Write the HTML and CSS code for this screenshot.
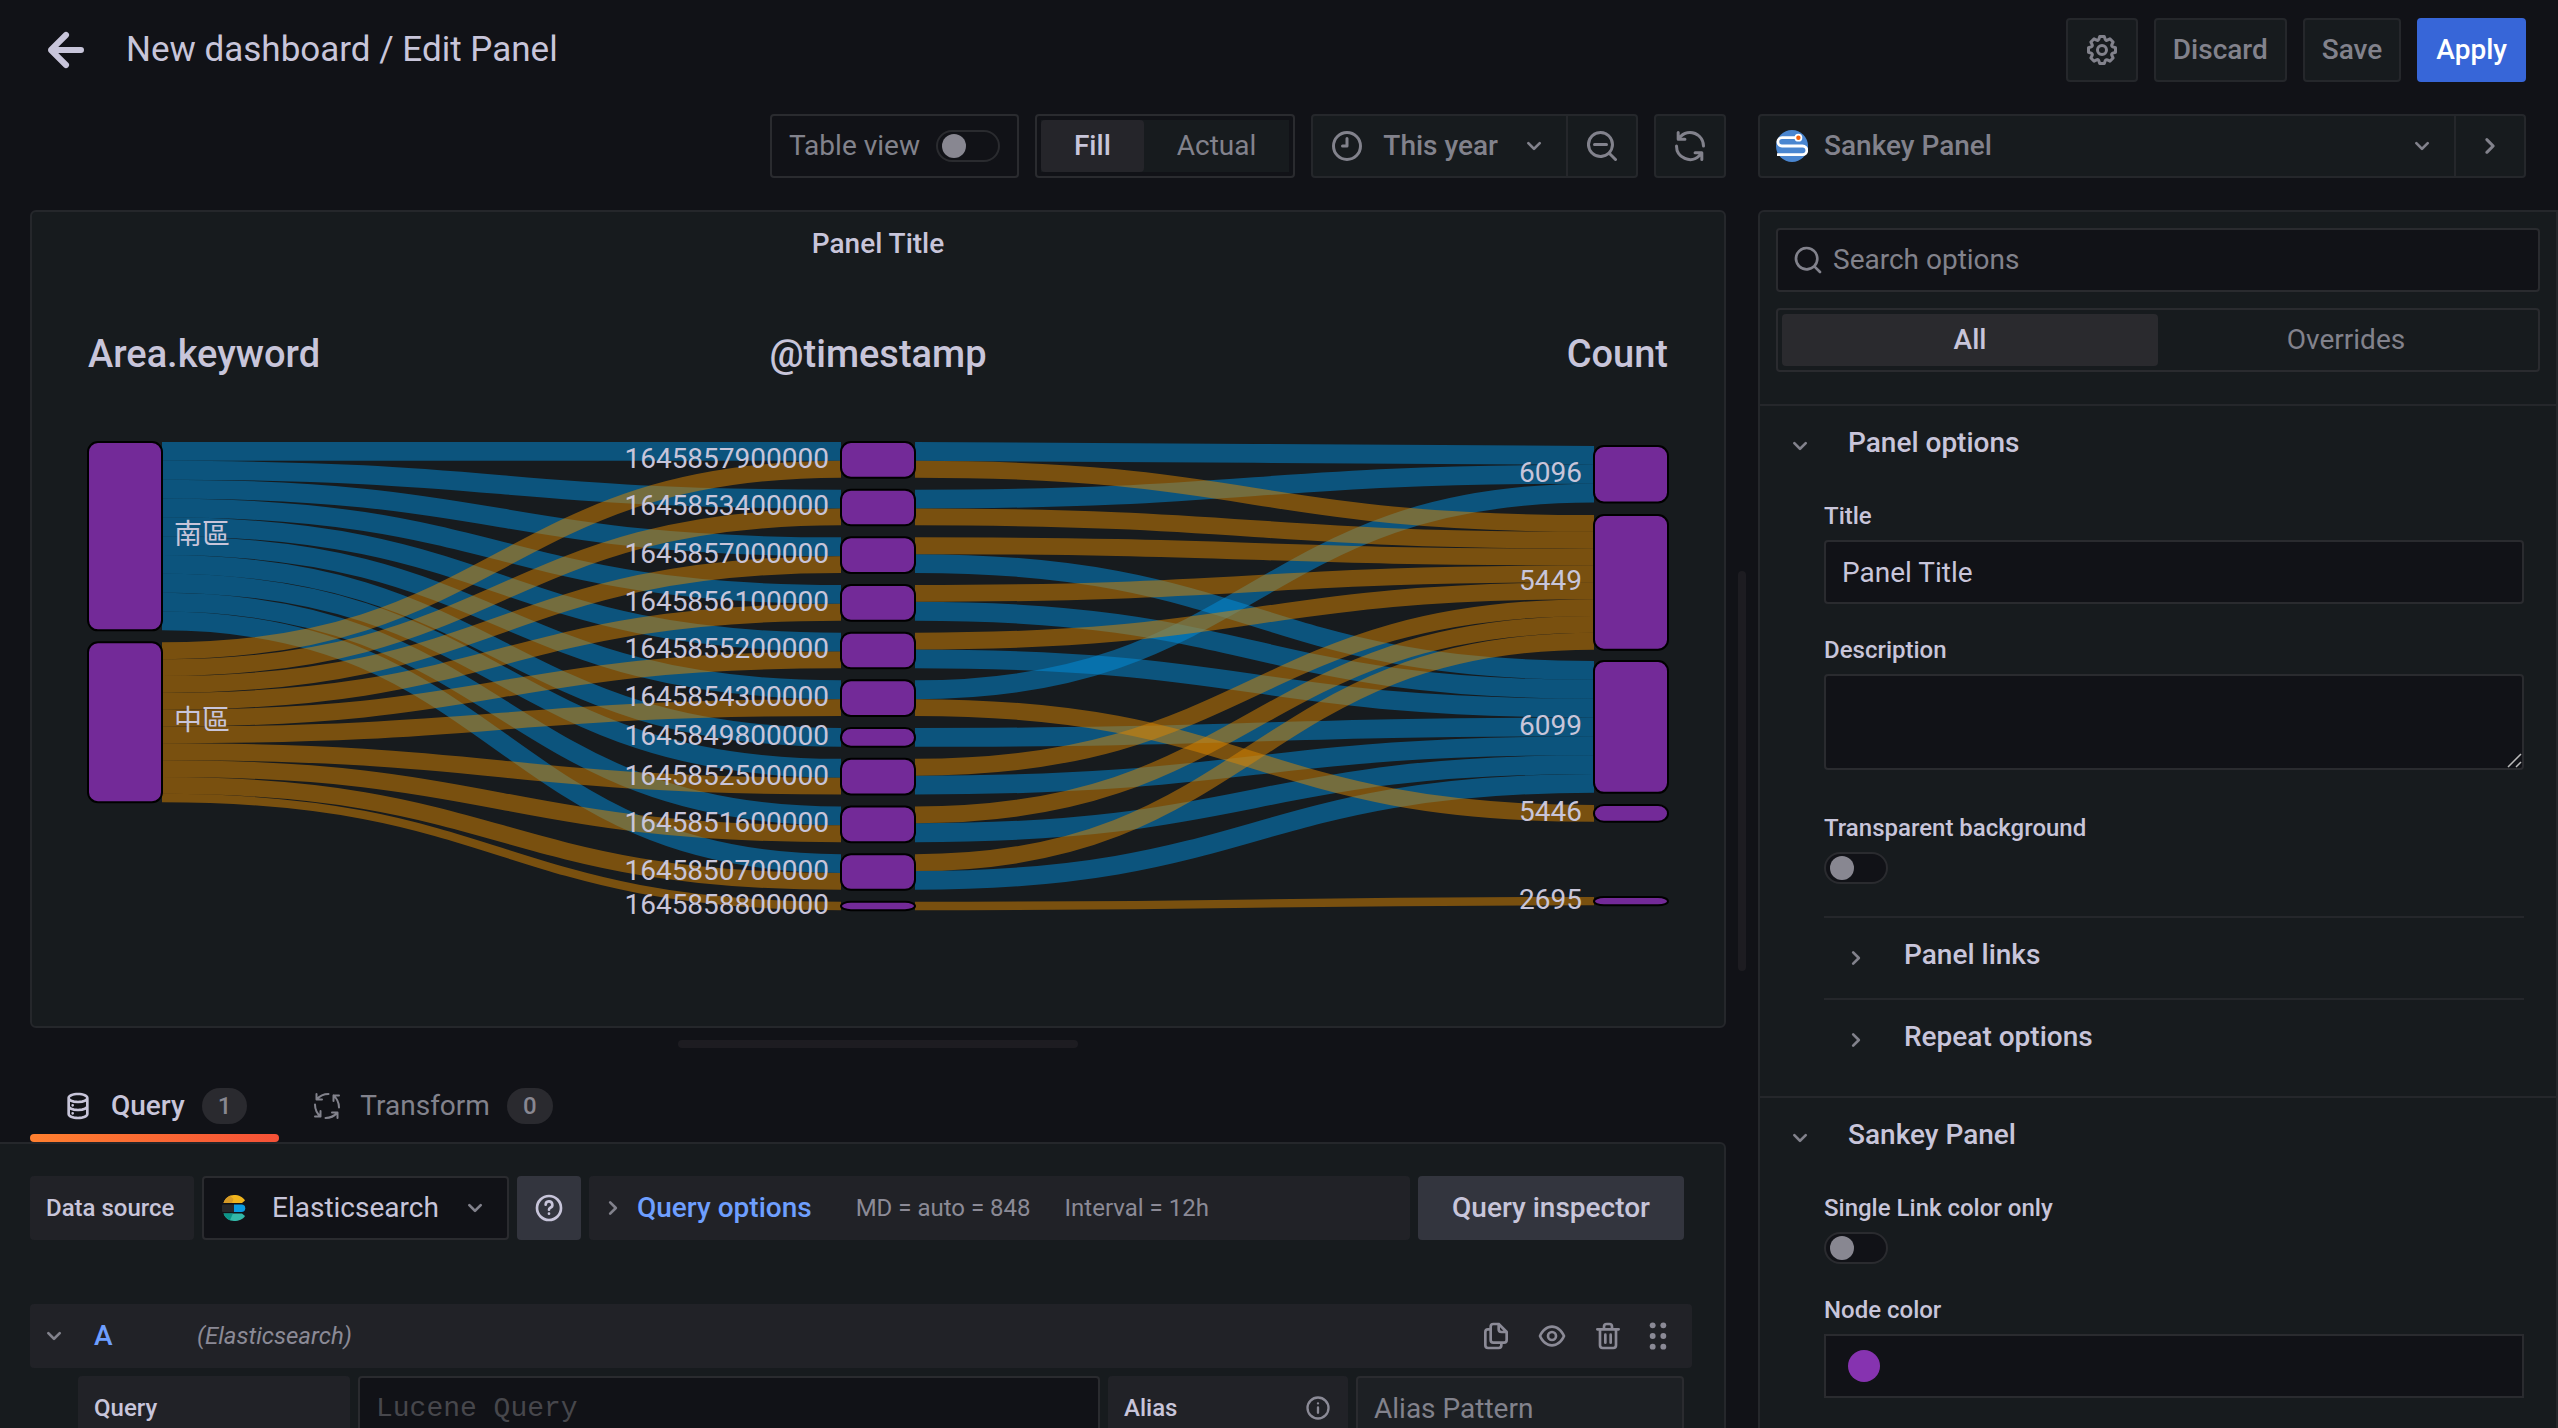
FILE: index.html
```html
<!DOCTYPE html>
<html lang="en">
<head>
<meta charset="utf-8">
<meta name="viewport" content="width=device-width, initial-scale=1">
<title>New dashboard / Edit Panel</title>
<link rel="stylesheet" href="styles.css">
</head>
<body>
<svg class="sprite" aria-hidden="true">
  <symbol id="angle-down" viewBox="0 0 24 24"><path d="M17,9.17a1,1,0,0,0-1.41,0L12,12.71,8.46,9.17a1,1,0,0,0-1.41,0,1,1,0,0,0,0,1.42l4.24,4.24a1,1,0,0,0,1.42,0L17,10.59A1,1,0,0,0,17,9.17Z"/></symbol>
  <symbol id="angle-right" viewBox="0 0 24 24"><path d="M14.83,11.29,10.59,7.05a1,1,0,0,0-1.42,0,1,1,0,0,0,0,1.41L12.71,12,9.17,15.54a1,1,0,0,0,0,1.41,1,1,0,0,0,.71.29,1,1,0,0,0,.71-.29l4.24-4.24A1,1,0,0,0,14.83,11.29Z"/></symbol>
</svg>

<header class="topbar">
  <button class="back" type="button" aria-label="Go back">
    <svg class="icon icon-back" viewBox="0 0 24 24"><path d="M17,11H9.41l3.3-3.29a1,1,0,1,0-1.42-1.42l-5,5a1,1,0,0,0-.21.33,1,1,0,0,0,0,.76,1,1,0,0,0,.21.33l5,5a1,1,0,0,0,1.42,0,1,1,0,0,0,0-1.42L9.41,13H17a1,1,0,0,0,0-2Z"/></svg>
  </button>
  <h1 class="page-title">New dashboard / Edit Panel</h1>
  <div class="actions">
    <button class="btn" type="button" aria-label="Dashboard settings">
      <svg class="icon icon-lg" viewBox="0 0 24 24"><path d="M21.32,9.55l-1.89-.63.89-1.78A1,1,0,0,0,20.13,6L18,3.87a1,1,0,0,0-1.15-.19l-1.78.89-.63-1.89A1,1,0,0,0,13.5,2h-3a1,1,0,0,0-.95.68L8.92,4.57,7.14,3.68A1,1,0,0,0,6,3.87L3.87,6a1,1,0,0,0-.19,1.15l.89,1.78-1.89.63A1,1,0,0,0,2,10.5v3a1,1,0,0,0,.68.95l1.89.63-.89,1.78A1,1,0,0,0,3.87,18L6,20.13a1,1,0,0,0,1.15.19l1.78-.89.63,1.89a1,1,0,0,0,.95.68h3a1,1,0,0,0,.95-.68l.63-1.89,1.78.89A1,1,0,0,0,18,20.13L20.13,18a1,1,0,0,0,.19-1.15l-.89-1.78,1.89-.63A1,1,0,0,0,22,13.5v-3A1,1,0,0,0,21.32,9.55ZM20,12.78l-1.2.4A2,2,0,0,0,17.64,16l.57,1.14-1.1,1.1L16,17.64a2,2,0,0,0-2.79,1.16l-.4,1.2H11.22l-.4-1.2A2,2,0,0,0,8,17.64l-1.14.57-1.1-1.1L6.36,16A2,2,0,0,0,5.2,13.18L4,12.78V11.22l1.2-.4A2,2,0,0,0,6.36,8L5.79,6.89l1.1-1.1L8,6.36A2,2,0,0,0,10.82,5.2l.4-1.2h1.56l.4,1.2A2,2,0,0,0,16,6.36l1.14-.57,1.1,1.1L17.64,8a2,2,0,0,0,1.16,2.79l1.2.4ZM12,8a4,4,0,1,0,4,4A4,4,0,0,0,12,8Zm0,6a2,2,0,1,1,2-2A2,2,0,0,1,12,14Z"/></svg>
    </button>
    <button class="btn btn-text" type="button">Discard</button>
    <button class="btn btn-text" type="button">Save</button>
    <button class="btn btn-text btn-primary" type="button">Apply</button>
  </div>
</header>

<main class="editor">
  <section class="workspace">
    <div class="toolbar">
      <label class="table-view">Table view <input class="switch" type="checkbox"></label>
      <fieldset class="segmented segmented-sm" aria-label="Display mode">
        <label class="segment"><input type="radio" name="display" checked><span>Fill</span></label>
        <label class="segment"><input type="radio" name="display"><span>Actual</span></label>
      </fieldset>
      <div class="btn-group">
        <button class="btn btn-time" type="button">
          <svg class="icon icon-lg line" viewBox="0 0 24 24"><circle cx="12" cy="12" r="9"/><path d="M12 7v5H9"/></svg>
          This year
          <svg class="icon"><use href="#angle-down"/></svg>
        </button>
        <button class="btn" type="button" aria-label="Zoom out">
          <svg class="icon icon-lg" viewBox="0 0 24 24"><path d="M21.71,20.29,18,16.61A9,9,0,1,0,16.61,18l3.68,3.68a1,1,0,0,0,1.42,0A1,1,0,0,0,21.71,20.29ZM11,18a7,7,0,1,1,7-7A7,7,0,0,1,11,18Zm4-8H7a1,1,0,0,0,0,2h8a1,1,0,0,0,0-2Z"/></svg>
        </button>
      </div>
      <button class="btn" type="button" aria-label="Refresh">
        <svg class="icon icon-lg" viewBox="0 0 24 24"><path d="M19.91,15.51H15.38a1,1,0,0,0,0,2h2.4A8,8,0,0,1,4,12a1,1,0,0,0-2,0,10,10,0,0,0,16.88,7.23V21a1,1,0,0,0,2,0V16.5A1,1,0,0,0,19.91,15.51ZM12,2A10,10,0,0,0,5.12,4.77V3a1,1,0,0,0-2,0V7.5a1,1,0,0,0,1,1h4.5a1,1,0,0,0,0-2H6.22A8,8,0,0,1,20,12a1,1,0,0,0,2,0A10,10,0,0,0,12,2Z"/></svg>
      </button>
    </div>

    <article class="panel">
      <h2 class="panel-title">Panel Title</h2>
      <svg id="sankey" class="sankey" viewBox="0 0 1692 750" role="img" aria-label="Sankey diagram"></svg>
    </article>
    <div class="resize-row"><div class="handle handle-row"></div></div>

    <nav class="tabs">
      <button class="tab tab-active" type="button">
        <svg class="icon" viewBox="0 0 24 24"><path d="M8,16.5a1,1,0,1,0,1,1A1,1,0,0,0,8,16.5ZM12,2C8,2,4,3.37,4,6V18c0,2.63,4,4,8,4s8-1.37,8-4V6C20,3.37,16,2,12,2Zm6,16c0,.71-2.28,2-6,2s-6-1.29-6-2V14.73A13.16,13.16,0,0,0,12,16a13.16,13.16,0,0,0,6-1.27Zm0-6c0,.71-2.28,2-6,2s-6-1.29-6-2V8.73A13.16,13.16,0,0,0,12,10a13.16,13.16,0,0,0,6-1.27ZM12,8C8.28,8,6,6.71,6,6s2.28-2,6-2,6,1.29,6,2S15.72,8,12,8ZM8,10.5a1,1,0,1,0,1,1A1,1,0,0,0,8,10.5Z"/></svg>
        Query <span class="badge">1</span>
      </button>
      <button class="tab" type="button">
        <svg class="icon line" viewBox="-2 -2 32 32">
          <g id="turn"><path d="M3.500 2v5.500h5.500M15.500 2C10.500 2 7 3.500 3.500 7.500"/></g>
          <use href="#turn" transform="rotate(90 14 14)"/><use href="#turn" transform="rotate(180 14 14)"/><use href="#turn" transform="rotate(270 14 14)"/>
        </svg>
        Transform <span class="badge">0</span>
      </button>
    </nav>

    <section class="query-pane">
      <div class="source-row">
        <label class="tag tag-source" for="source">Data source</label>
        <div class="source-select">
          <svg class="elastic" viewBox="0 0 24 28">
            <path fill="#f0b41d" d="M1.500 9C3 4 7 1 12 1c5 0 9 2 11 5.500L20 9z"/><path fill="#d69a27" d="M1.500 9C2.500 5.500 5 3 8 1.800L11.500 5 10 9z"/>
            <rect x="0" y="10.500" width="13" height="7.500" rx="1" fill="#27282b"/><path fill="#0b9be0" d="M12 10.500h7.500a3.750 3.750 0 0 1 0 7.500H12z"/>
            <path fill="#33b8a8" d="M1.500 19.500H20l3 2.500c-2 3.500-6 5-11 5-5 0-9-3-10.500-7.500z"/><path fill="#0c9488" d="M1.500 19.500H11L8 26.200C5 25 2.500 22.500 1.500 19.500z"/>
          </svg>
          <select id="source"><option>Elasticsearch</option></select>
          <svg class="icon chevron"><use href="#angle-down"/></svg>
        </div>
        <button class="btn btn-solid btn-help" type="button" aria-label="Help">
          <svg class="icon line" viewBox="0 0 24 24"><circle cx="12" cy="12" r="9"/><path d="M9.500 9.500A2.500 2.500 0 1 1 12.800 11.900Q12 12.300 12 13.300M12 16.200v.1"/></svg>
        </button>
        <div class="query-options">
          <button class="options-toggle" type="button"><svg class="icon"><use href="#angle-right"/></svg>Query options</button>
          <span>MD = auto = 848</span>
          <span>Interval = 12h</span>
        </div>
        <button class="btn btn-solid btn-inspect" type="button">Query inspector</button>
      </div>

      <div class="query-head">
        <svg class="icon"><use href="#angle-down"/></svg>
        <strong class="ref-id">A</strong>
        <em class="ref-source">(Elasticsearch)</em>
        <button class="icon-btn" type="button" aria-label="Duplicate query"><svg class="icon" viewBox="0 0 24 24"><path d="M21,8.94a1.31,1.31,0,0,0-.06-.27l0-.09a1.07,1.07,0,0,0-.19-.28h0l-6-6h0a1.07,1.07,0,0,0-.28-.19.32.32,0,0,0-.09,0A.88.88,0,0,0,14.05,2H10A3,3,0,0,0,7,5V6H6A3,3,0,0,0,3,9V19a3,3,0,0,0,3,3h8a3,3,0,0,0,3-3V18h1a3,3,0,0,0,3-3V9S21,9,21,8.94ZM15,5.410,17.590,8H16a1,1,0,0,1-1-1ZM15,19a1,1,0,0,1-1,1H6a1,1,0,0,1-1-1V9A1,1,0,0,1,6,8H7v7a3,3,0,0,0,3,3h5Zm4-4a1,1,0,0,1-1,1H10a1,1,0,0,1-1-1V5a1,1,0,0,1,1-1h3V7a3,3,0,0,0,3,3h3Z"/></svg></button>
        <button class="icon-btn" type="button" aria-label="Disable query"><svg class="icon" viewBox="0 0 24 24"><path d="M21.920,11.600C19.900,6.910,16.100,4,12,4S4.100,6.910,2.080,11.600a1,1,0,0,0,0,.8C4.100,17.090,7.900,20,12,20s7.900-2.910,9.920-7.600A1,1,0,0,0,21.920,11.600ZM12,18c-3.170,0-6.170-2.290-7.900-6C5.830,8.290,8.830,6,12,6s6.170,2.290,7.900,6C18.170,15.710,15.170,18,12,18ZM12,8a4,4,0,1,0,4,4A4,4,0,0,0,12,8Zm0,6a2,2,0,1,1,2-2A2,2,0,0,1,12,14Z"/></svg></button>
        <button class="icon-btn" type="button" aria-label="Remove query"><svg class="icon" viewBox="0 0 24 24"><path d="M10,18a1,1,0,0,0,1-1V11a1,1,0,0,0-2,0v6A1,1,0,0,0,10,18ZM20,6H16V5a3,3,0,0,0-3-3H11A3,3,0,0,0,8,5V6H4A1,1,0,0,0,4,8H5V19a3,3,0,0,0,3,3h8a3,3,0,0,0,3-3V8h1a1,1,0,0,0,0-2ZM10,5a1,1,0,0,1,1-1h2a1,1,0,0,1,1,1V6H10Zm7,14a1,1,0,0,1-1,1H8a1,1,0,0,1-1-1V8H17Zm-3-1a1,1,0,0,0,1-1V11a1,1,0,0,0-2,0v6A1,1,0,0,0,14,18Z"/></svg></button>
        <button class="icon-btn icon-drag" type="button" aria-label="Move query"><svg class="icon" viewBox="0 0 24 24"><circle cx="8" cy="4" r="2.200"/><circle cx="16" cy="4" r="2.200"/><circle cx="8" cy="12" r="2.200"/><circle cx="16" cy="12" r="2.200"/><circle cx="8" cy="20" r="2.200"/><circle cx="16" cy="20" r="2.200"/></svg></button>
      </div>

      <div class="query-fields">
        <label class="tag tag-query" for="lucene">Query</label>
        <input id="lucene" class="input input-code" type="text" placeholder="Lucene Query">
        <label class="tag tag-alias" for="alias">Alias
          <svg class="icon icon-sm line" viewBox="0 0 24 24"><circle cx="12" cy="12" r="9"/><path d="M12 11.500v4.500M12 8v.1"/></svg>
        </label>
        <input id="alias" class="input input-alias" type="text" placeholder="Alias Pattern" disabled>
      </div>
    </section>
  </section>

  <div class="splitter"><div class="handle handle-column"></div></div>

  <aside class="sidebar">
    <div class="btn-group viz-picker">
      <button class="btn btn-viz" type="button" aria-haspopup="listbox">
        <svg class="viz-logo" viewBox="0 0 32 32"><circle cx="16" cy="16" r="16" fill="#4a86d0"/><path d="M22 7.700H6a4.150 4.150 0 0 0 0 8.300H26.500a4.350 4.350 0 0 1 0 8.700H1" fill="none" stroke="#fff" stroke-width="2.800"/><circle cx="22.400" cy="7.700" r="3.900" fill="#fff"/><circle cx="22.400" cy="7.700" r="2.200" fill="#f2600c"/></svg>
        Sankey Panel
        <svg class="icon"><use href="#angle-down"/></svg>
      </button>
      <button class="btn" type="button" aria-label="Collapse options"><svg class="icon icon-lg"><use href="#angle-right"/></svg></button>
    </div>

    <div class="options">
      <div class="options-filter">
        <div class="search">
          <svg class="icon" viewBox="0 0 24 24"><path d="M21.710,20.290,18,16.610A9,9,0,1,0,16.610,18l3.680,3.680a1,1,0,0,0,1.420,0A1,1,0,0,0,21.710,20.290ZM11,18a7,7,0,1,1,7-7A7,7,0,0,1,11,18Z"/></svg>
          <input type="text" placeholder="Search options" aria-label="Search options">
        </div>
        <fieldset class="segmented segmented-wide" aria-label="Option filter">
          <label class="segment"><input type="radio" name="filter" checked><span>All</span></label>
          <label class="segment"><input type="radio" name="filter"><span>Overrides</span></label>
        </fieldset>
      </div>

      <section class="group">
        <h3 class="group-title"><svg class="icon"><use href="#angle-down"/></svg>Panel options</h3>
        <div class="group-body">
          <div class="field">
            <label for="title">Title</label>
            <input id="title" class="input" type="text" value="Panel Title">
          </div>
          <div class="field">
            <label for="description">Description</label>
            <textarea id="description" class="input input-area"></textarea>
          </div>
          <div class="field">
            <label for="transparent">Transparent background</label>
            <input id="transparent" class="switch" type="checkbox">
          </div>
          <h4 class="subgroup"><svg class="icon"><use href="#angle-right"/></svg>Panel links</h4>
          <h4 class="subgroup"><svg class="icon"><use href="#angle-right"/></svg>Repeat options</h4>
        </div>
      </section>

      <section class="group">
        <h3 class="group-title"><svg class="icon"><use href="#angle-down"/></svg>Sankey Panel</h3>
        <div class="group-body">
          <div class="field">
            <label for="single">Single Link color only</label>
            <input id="single" class="switch" type="checkbox">
          </div>
          <div class="field">
            <label for="node-color">Node color</label>
            <button id="node-color" class="color-field" type="button"><span class="swatch"></span></button>
          </div>
        </div>
      </section>
    </div>
  </aside>
</main>
<script src="sankey.js"></script>
</body>
</html>
```

FILE: sankey.js
```js
// Draws the three-column flow diagram: area -> timestamp -> count.
(function () {
  const NS = "http://www.w3.org/2000/svg";
  const svg = document.getElementById("sankey");
  const SCALE = 18.83 / 6096;
  const GAP = 12;
  const NODE_WIDTH = 74;
  const COLUMNS = [56, 809, 1562];
  const COLORS = { south: "#018edb", central: "#db8500" };

  // Each timestamp lists its flows by area: [area, count].
  const times = [
    ["1645857900000", [["south", 6096], ["central", 5449]]],
    ["1645853400000", [["south", 6096], ["central", 5449]]],
    ["1645857000000", [["south", 6099], ["central", 5449]]],
    ["1645856100000", [["south", 6099], ["central", 5449]]],
    ["1645855200000", [["south", 6099], ["central", 5449]]],
    ["1645854300000", [["south", 6096], ["central", 5446]]],
    ["1645849800000", [["south", 6099]]],
    ["1645852500000", [["south", 6099], ["central", 5449]]],
    ["1645851600000", [["south", 6099], ["central", 5449]]],
    ["1645850700000", [["south", 6099], ["central", 5449]]],
    ["1645858800000", [["central", 2695]]]
  ];
  const areas = [["south", "南區"], ["central", "中區"]];
  const counts = [[6096, 170], [5449, 239], [6099, 385], [5446, 529], [2695, 621]];

  function add(name, attrs, text) {
    const el = document.createElementNS(NS, name);
    for (const key in attrs) el.setAttribute(key, attrs[key]);
    if (text) el.textContent = text;
    svg.appendChild(el);
  }

  const flows = [];
  times.forEach(([, list], i) => list.forEach(([area, count]) =>
    flows.push({ area, count, time: i, size: count * SCALE })));

  const nodes = [];
  function place(column, y, label, members) {
    const height = members.reduce((sum, f) => sum + f.size, 0);
    nodes.push({ x: COLUMNS[column], y, height, label, column });
    return height;
  }

  // Left column, stacked by area.
  let y = 166;
  areas.forEach(([area, label]) => {
    const members = flows.filter(f => f.area === area);
    let offset = y;
    members.forEach(f => { f.leftY = offset + f.size / 2; offset += f.size; });
    y += place(0, y, label, members) + GAP;
  });

  // Right column.
  counts.forEach(([count, top]) => {
    const members = flows.filter(f => f.count === count);
    let offset = top;
    members.forEach(f => { f.rightY = offset + f.size / 2; offset += f.size; });
    place(2, top, String(count), members);
  });

  // Middle column: incoming flows keep area order, outgoing follow their target.
  y = 166;
  times.forEach(([label], i) => {
    const members = flows.filter(f => f.time === i);
    let offset = y;
    members.forEach(f => { f.inY = offset + f.size / 2; offset += f.size; });
    offset = y;
    members.slice().sort((a, b) => a.rightY - b.rightY)
      .forEach(f => { f.outY = offset + f.size / 2; offset += f.size; });
    y += place(1, y, label, members) + GAP;
  });

  function link(x0, y0, x1, y1, flow) {
    const mid = (x0 + x1) / 2;
    add("path", {
      class: "link",
      d: `M${x0},${y0}C${mid},${y0} ${mid},${y1} ${x1},${y1}`,
      stroke: COLORS[flow.area],
      "stroke-width": flow.size
    });
  }

  areas.forEach(([area]) => flows.filter(f => f.area === area).forEach(f => {
    link(COLUMNS[0] + NODE_WIDTH, f.leftY, COLUMNS[1], f.inY, f);
    link(COLUMNS[1] + NODE_WIDTH, f.outY, COLUMNS[2], f.rightY, f);
  }));

  nodes.forEach(n => {
    add("rect", { class: "node", x: n.x, y: n.y, width: NODE_WIDTH, height: n.height, rx: 10 });
    const first = n.column === 0;
    add("text", {
      class: "node-label",
      x: first ? n.x + NODE_WIDTH + 12 : n.x - 12,
      y: n.y + n.height / 2 + 8,
      "text-anchor": first ? "start" : "end"
    }, n.label);
  });

  add("text", { class: "axis", x: 56, y: 91, "text-anchor": "start" }, "Area.keyword");
  add("text", { class: "axis", x: 846, y: 91, "text-anchor": "middle" }, "@timestamp");
  add("text", { class: "axis", x: 1636, y: 91, "text-anchor": "end" }, "Count");
})();
```

FILE: styles.css
```css
:root {
  --canvas: #111217;
  --surface: #171b1e;
  --raised: #212227;
  --solid: #33353e;
  --line: #25272b;
  --field-line: #2a2b2f;
  --text: #c8c5da;
  --muted: #82828c;
  --link: #6e9fff;
}

* { box-sizing: border-box; }

body {
  margin: 0;
  height: 100vh;
  overflow: hidden;
  display: flex;
  flex-direction: column;
  background: var(--canvas);
  color: var(--text);
  font: 400 28px/32px Roboto, "Noto Sans CJK TC", sans-serif;
}

h1, h2, h3, h4 { margin: 0; font-size: 28px; font-weight: 500; }
button, input, select, textarea { font: inherit; color: inherit; }
button { cursor: pointer; }

.sprite { display: none; }
.icon { width: 32px; height: 32px; flex: none; fill: currentColor; }
.icon-sm { width: 28px; height: 28px; }
.icon-lg { width: 36px; height: 36px; }
.icon-back { width: 72px; height: 72px; }
.line { fill: none; stroke: currentColor; stroke-width: 2; stroke-linecap: round; stroke-linejoin: round; }

/* Top bar */
.topbar { display: flex; align-items: center; padding: 18px 32px 32px 30px; }
.back { display: flex; margin: -4px 0; padding: 0; border: 0; background: none; }
.page-title { margin-left: 24px; font-size: 35px; font-weight: 400; line-height: 40px; }
.actions { display: flex; gap: 16px; margin-left: auto; }

.btn {
  display: flex;
  align-items: center;
  height: 64px;
  padding: 0 16px;
  border: 2px solid var(--line);
  border-radius: 4px;
  background: var(--surface);
  color: var(--muted);
  font-weight: 500;
  white-space: nowrap;
}
.btn-text { padding: 0 17px; }
.btn-primary { border-color: #3766d8; background: #3766d8; color: #fff; }
.btn-solid { border: 0; background: var(--solid); color: var(--text); }
.btn-group { display: flex; }
.btn-group .btn:first-child { border-radius: 4px 0 0 4px; }
.btn-group .btn:last-child { border-left: 0; border-radius: 0 4px 4px 0; }
.btn-time { gap: 18px; }
.btn-time .icon:last-child { margin-left: 2px; }
.btn-viz { gap: 16px; }

/* Editor layout */
.editor {
  flex: 1;
  min-height: 0;
  display: grid;
  grid-template-columns: minmax(0, 1726fr) 32px minmax(0, 800fr);
}
.workspace, .sidebar { display: flex; flex-direction: column; min-height: 0; }
.splitter { display: flex; align-items: center; justify-content: center; }
.handle { border-radius: 4px; background: #1d1c21; }
.handle-column { width: 8px; height: 400px; }
.resize-row { display: flex; justify-content: center; padding: 12px 0 22px 30px; }
.handle-row { width: 400px; height: 8px; }

.toolbar { display: flex; justify-content: flex-end; gap: 16px; margin-bottom: 32px; }
.table-view {
  display: flex;
  align-items: center;
  gap: 16px;
  padding: 0 17px;
  border: 2px solid var(--field-line);
  border-radius: 4px;
  color: var(--muted);
}

.switch {
  appearance: none;
  display: flex;
  align-items: center;
  width: 64px;
  height: 32px;
  margin: 0;
  padding: 0 4px;
  border: 2px solid var(--field-line);
  border-radius: 16px;
  background: var(--canvas);
}
.switch::before { content: ""; width: 24px; height: 24px; border-radius: 50%; background: #888791; }

.segmented {
  display: flex;
  min-width: 0;
  height: 64px;
  margin: 0;
  padding: 4px;
  border: 2px solid var(--field-line);
  border-radius: 4px;
}
.segment { position: relative; display: flex; }
.segment input { position: absolute; opacity: 0; }
.segment span {
  flex: 1;
  padding: 0 33px;
  border-radius: 4px;
  color: var(--muted);
  line-height: 52px;
  text-align: center;
}
.segment input:checked + span { background: #25252a; color: var(--text); font-weight: 500; }
.segmented-sm .segment { background: var(--surface); }
.segmented-wide .segment { flex: 1; }
.segmented-wide .segment input:checked + span { background: #2a2a2e; }

/* Visualization */
.panel {
  flex: none;
  margin-left: 30px;
  border: 2px solid var(--line);
  border-radius: 6px;
  background: var(--surface);
}
.panel-title { line-height: 64px; text-align: center; }
.sankey { display: block; width: 100%; height: auto; }
.link { fill: none; opacity: 0.5; }
.node { fill: #732a98; stroke: #000; stroke-width: 2; }
.node-label, .axis { fill: var(--text); font-size: 28px; }
.axis { font-size: 38px; font-weight: 500; }

/* Query tabs */
.tabs { display: flex; margin-left: 30px; }
.tab {
  position: relative;
  display: flex;
  align-items: center;
  gap: 17px;
  height: 72px;
  padding: 0 32px;
  border: 0;
  background: none;
  color: var(--muted);
}
.tab-active { color: var(--text); font-weight: 500; }
.tab-active::after {
  content: "";
  position: absolute;
  inset: auto 0 0;
  height: 8px;
  border-radius: 4px;
  background: linear-gradient(90deg, #ff7f2f, #f55137);
}
.badge {
  padding: 0 16px;
  border-radius: 18px;
  background: #2a2a2f;
  color: #888791;
  font-size: 24px;
  font-weight: 500;
  line-height: 36px;
}

.query-pane {
  flex: 1;
  padding: 32px 32px 0 30px;
  border: solid var(--line);
  border-width: 2px 2px 0 0;
  border-radius: 0 6px 0 0;
  background: var(--surface);
}
.source-row { display: flex; gap: 8px; margin: 0 8px 64px 0; }
.tag {
  display: flex;
  align-items: center;
  justify-content: space-between;
  height: 64px;
  padding: 0 16px;
  border-radius: 4px;
  background: var(--raised);
  font-size: 24px;
  font-weight: 500;
  white-space: nowrap;
}
.tag-source { flex: 0 0 164px; }
.source-select {
  display: flex;
  align-items: center;
  gap: 26px;
  padding: 0 16px 0 18px;
  border: 2px solid var(--field-line);
  border-radius: 4px;
  background: var(--canvas);
}
.source-select select { appearance: none; margin-right: -6px; padding: 0; border: 0; background: none; }
.elastic { width: 24px; height: 28px; }
.chevron { color: var(--muted); }
.btn-help { padding: 0 16px; }
.btn-inspect { padding: 0 34px; }
.query-options {
  flex: 1;
  display: flex;
  align-items: center;
  gap: 34px;
  padding: 0 8px;
  border-radius: 4px;
  background: var(--raised);
  color: #8b8a96;
  font-size: 24px;
}
.options-toggle {
  display: flex;
  align-items: center;
  gap: 8px;
  margin-right: 10px;
  padding: 0;
  border: 0;
  background: none;
  color: var(--link);
  font-size: 28px;
  font-weight: 500;
}
.options-toggle .icon { color: var(--muted); }

.query-head {
  display: flex;
  align-items: center;
  gap: 24px;
  height: 64px;
  padding: 0 18px 0 8px;
  border-radius: 4px;
  background: var(--raised);
  color: var(--muted);
}
.ref-id { width: 79px; color: var(--link); font-weight: 500; }
.ref-source { margin-right: auto; color: #8b8a96; font-size: 24px; }
.icon-btn { display: flex; padding: 0; border: 0; background: none; color: #8b8a96; }
.icon-drag { margin-left: -6px; }

.query-fields { display: flex; gap: 8px; margin: 8px 8px 0 48px; }
.tag-query { flex: 0 1 272px; }
.tag-alias { flex: 0 1 240px; }
.tag-alias .icon { color: #8b8a96; }

.input {
  display: block;
  width: 100%;
  height: 64px;
  padding: 0 16px;
  border: 2px solid var(--field-line);
  border-radius: 4px;
  background: var(--canvas);
  outline: 0;
}
.input::placeholder { color: var(--muted); opacity: 1; }
.input-code { flex: 1; width: auto; min-width: 0; font-family: "Liberation Mono", monospace; }
.input-code::placeholder { color: #47474c; }
.input-alias { flex: 0 1 328px; min-width: 0; background: #1d2024; }

/* Options sidebar */
.viz-picker { margin: 0 32px 32px 0; }
.btn-viz { flex: 1; }
.btn-viz .icon { margin-left: auto; }
.viz-logo { width: 32px; height: 32px; }

.options {
  flex: 1;
  border: 2px solid var(--line);
  border-bottom: 0;
  border-radius: 6px 0 0 0;
  background: var(--surface);
}
.options-filter { display: grid; gap: 16px; padding: 16px 16px 32px; }
.search {
  display: flex;
  align-items: center;
  gap: 9px;
  height: 64px;
  padding: 0 14px;
  border: 2px solid var(--field-line);
  border-radius: 4px;
  background: var(--canvas);
  color: var(--muted);
}
.search input { flex: 1; min-width: 0; padding: 0; border: 0; outline: 0; background: none; }
.search input::placeholder { color: var(--muted); opacity: 1; }

.group { border-top: 2px solid var(--line); padding-bottom: 22px; }
.group-title { display: flex; gap: 32px; padding-left: 24px; line-height: 74px; }
.group-title .icon, .subgroup .icon { margin-top: 24px; color: var(--muted); }
.group-body { padding: 20px 32px 0 64px; }
.field { display: grid; gap: 8px; margin-bottom: 30px; }
.field label { font-size: 24px; font-weight: 500; }
.input-area { height: 96px; margin-bottom: 12px; resize: vertical; }
.input-area::-webkit-resizer {
  background: url("data:image/svg+xml,%3Csvg xmlns='http://www.w3.org/2000/svg' viewBox='0 0 15 15'%3E%3Cpath d='M1 14 14 1M9 14l5-5' stroke='%23bbb' stroke-width='1.500'/%3E%3C/svg%3E");
}
.subgroup { display: flex; gap: 32px; padding-left: 16px; border-top: 2px solid var(--line); line-height: 74px; }
.subgroup + .subgroup { margin-top: 6px; }
.field + .subgroup { margin-top: 32px; }
.color-field {
  display: flex;
  align-items: center;
  height: 64px;
  padding: 0 22px;
  border: 2px solid var(--field-line);
  background: var(--canvas);
}
.swatch { width: 32px; height: 32px; border-radius: 50%; background: #8633b0; }
```
